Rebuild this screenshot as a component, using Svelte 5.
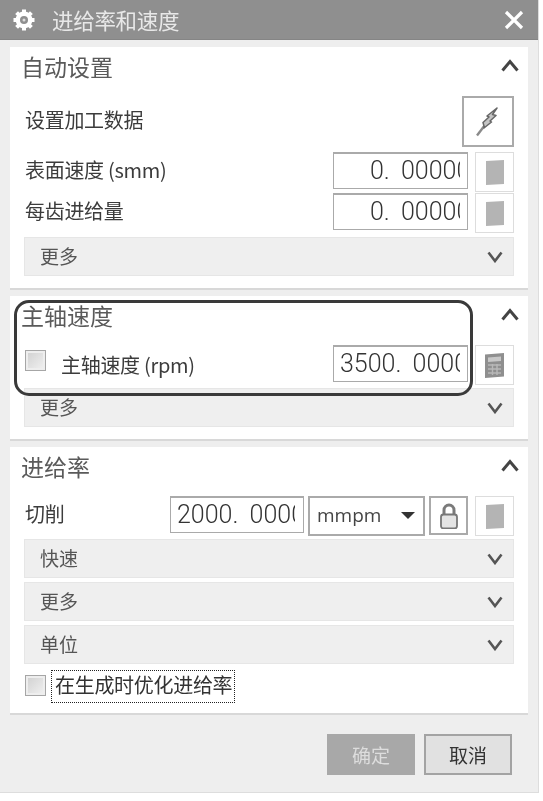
<script>
  const gearTeeth = [0, 45, 90, 135, 180, 225, 270, 315];
</script>

{#snippet bar(label)}
  <div class="bar">
    <span>{label}</span>
    <svg width="16" height="12" viewBox="0 0 16 12"><path d="M1.5 1.5 L8 10 L14.5 1.5" fill="none" stroke="#555" stroke-width="2.6"/></svg>
  </div>
{/snippet}

{#snippet head(label)}
  <div class="head">
    <span>{label}</span>
    <svg width="18" height="13" viewBox="0 0 18 13"><path d="M1.5 11.5 L9 2.5 L16.5 11.5" fill="none" stroke="#444" stroke-width="3"/></svg>
  </div>
{/snippet}

{#snippet blank()}
  <div class="mini">
    <svg width="18" height="25" viewBox="0 0 18 25"><path d="M0 1 L18 0 V24 L0 25 Z" fill="#b4b4b4"/></svg>
  </div>
{/snippet}

<div class="window">
  <header class="title">
    <svg class="gear" width="22" height="22" viewBox="0 0 22 22">
      <circle cx="11" cy="11" r="8.4" fill="#fff"/>
      {#each gearTeeth as a}
        <rect x="9" y="0.5" width="4" height="4" fill="#fff" transform="rotate({a} 11 11)"/>
      {/each}
      <circle cx="11" cy="11" r="4" fill="#8f8f8f"/>
      <circle cx="11" cy="11" r="1.5" fill="#dcdcdc"/>
    </svg>
    <span class="title-text">进给率和速度</span>
    <svg class="close" width="20" height="20" viewBox="0 0 20 20"><path d="M2 2 L18 18 M18 2 L2 18" stroke="#fff" stroke-width="3.2"/></svg>
  </header>

  <div class="body">
    <section class="s1">
      {@render head("自动设置")}
      <div class="row data">
        <span class="label">设置加工数据</span>
        <div class="bolt">
          <svg width="24" height="30" viewBox="0 0 24 30">
            <path d="M1 28.5 L9 18" stroke="#8a8a8a" stroke-width="2.4" fill="none"/>
            <path d="M8 19 L7 15.5 L13 10 L11 9 L21 1 L16.5 7.5 L20 8.5 L14 14 L15.5 15 L8 21 Z" fill="#c4c4c4" stroke="#666" stroke-width="1.5" stroke-linejoin="round"/>
          </svg>
        </div>
      </div>
      <div class="row field">
        <span class="label">表面速度 (smm)</span>
        <div class="num zero"><span>0. 00000</span></div>
        {@render blank()}
      </div>
      <div class="row field second">
        <span class="label">每齿进给量</span>
        <div class="num zero"><span>0. 00000</span></div>
        {@render blank()}
      </div>
      {@render bar("更多")}
    </section>

    <section class="s2">
      {@render head("主轴速度")}
      <div class="row field">
        <span class="check"></span>
        <span class="label rpm">主轴速度 (rpm)</span>
        <div class="num"><span>3500. 0000</span></div>
        <div class="mini">
          <svg width="19" height="25" viewBox="0 0 19 25">
            <path d="M0 1.5 L19 0 V23.5 L0 25 Z" fill="#8f8f8f"/>
            <path d="M3 4.5 L16 3.5 V8 L3 9 Z" fill="#c8c8c8"/>
            <path d="M3 12 H16 M3 16 H16 M3 20 H16 M7.5 11 V22 M12 11 V22" stroke="#b8b8b8" stroke-width="1.4"/>
          </svg>
        </div>
      </div>
      {@render bar("更多")}
    </section>

    <section class="s3">
      {@render head("进给率")}
      <div class="row cut">
        <span class="label">切削</span>
        <div class="num small"><span>2000. 0000</span></div>
        <div class="select">
          <span>mmpm</span>
          <svg width="14" height="7" viewBox="0 0 14 7"><path d="M0 0 H14 L7 7 Z" fill="#333"/></svg>
        </div>
        <div class="lock">
          <svg width="18" height="26" viewBox="0 0 18 26">
            <path d="M4 12 V7 a5 5 0 0 1 10 0 V12" fill="none" stroke="#7a7a7a" stroke-width="3"/>
            <rect x="1" y="11.5" width="16" height="14" rx="2.5" fill="#e4e4e4" stroke="#777" stroke-width="1.8"/>
          </svg>
        </div>
        {@render blank()}
      </div>
      <div class="stack">
        {@render bar("快速")}
        {@render bar("更多")}
        {@render bar("单位")}
      </div>
      <div class="opt">
        <span class="check"></span>
        <span class="focus">在生成时优化进给率</span>
      </div>
    </section>

    <footer class="actions">
      <button class="ok">确定</button>
      <button class="cancel">取消</button>
    </footer>
  </div>

  <div class="note"></div>
</div>

<style>
  :global(body) { background: #fff; }
  .window {
    position: relative;
    width: 539px;
    height: 793px;
    display: flex;
    flex-direction: column;
    background: #eee;
    box-sizing: border-box;
    font-family: "Noto Sans CJK SC", "Open Sans", sans-serif;
    color: #444;
    font-size: 20px;
    letter-spacing: -0.3px;
    border-bottom: 1px solid #ddd;
    border-right: 1px solid #ddd;
    filter: blur(0.4px);
  }
  .title {
    background: #8f8f8f;
    border-bottom: 1px solid #858585;
    display: flex;
    align-items: center;
    padding: 0 14px 0 13px;
    flex: none;
    box-sizing: border-box;
    height: 40px;
  }
  .title-text { margin-left: 17px; font-size: 21.5px; flex: 1; line-height: 1; color: #e8e8e8; }
  .body { flex: 1; display: flex; flex-direction: column; gap: 6px; padding: 7px 10px 0; }
  section {
    background: #fff;
    border-bottom: 2px solid #d8d8d8;
    padding: 0 14px;
    box-sizing: border-box;
    flex: none;
  }
  .s1 { height: 243px; }
  .s2 { height: 145px; }
  .s3 { height: 268px; }
  .head {
    height: 42px;
    box-sizing: border-box;
    padding-bottom: 4px;
    margin: 0 0 7px -3px;
    display: flex;
    align-items: center;
    justify-content: space-between;
    font-size: 23px;
    letter-spacing: 0;
    color: #5a5a5a;
  }
  .head span { line-height: 1; }
  .head svg { margin-right: -5px; margin-top: -1px; }
  .row { display: flex; align-items: flex-start; }
  .label { flex: 1; line-height: 1; color: #3c3c3c; padding-top: 8px; margin-left: 1px; white-space: nowrap; }
  .data { height: 51px; align-items: center; margin-bottom: 5px; }
  .data .label { padding: 0 0 4px; }
  .bolt {
    width: 52px; height: 51px; box-sizing: border-box;
    border: 2px solid #aaa;
    display: flex; align-items: center; justify-content: center;
  }
  .field { height: 41px; gap: 7px; }
  .field.second { height: 41px; margin-bottom: 3px; }
  .num {
    width: 135px; height: 37px; box-sizing: border-box;
    border: 1px solid #aaa;
    border-width: 2px 1px 1px 1px;
    padding: 0 7px 0 6px;
    background: #fff;
    flex: none;
  }
  .num span {
    display: block;
    overflow: hidden;
    white-space: pre;
    font-family: Roboto, sans-serif;
    font-weight: 300;
    font-size: 25px;
    letter-spacing: 0;
    word-spacing: 5px;
    line-height: 34px;
    color: #333;
  }
  .num.zero { padding-left: 36px; }
  .num.small { width: 134px; padding-right: 8px; }
  .mini {
    width: 39px; height: 40px; box-sizing: border-box;
    border: 1px solid #ddd;
    display: flex; align-items: center; justify-content: center;
    flex: none;
  }
  .bar {
    height: 39px; box-sizing: border-box;
    background: #efefef;
    border: 1px solid #e6e6e6;
    display: flex; align-items: center; justify-content: space-between;
    padding: 0 10px 3px 15px;
    color: #555;
    font-size: 19px;
    letter-spacing: 0;
  }
  .bar svg { margin-top: 3px; }
  .check {
    width: 21px; height: 21px; box-sizing: border-box; flex: none;
    border: 1px solid #a6a6a6;
    background: linear-gradient(135deg, #cfcfcf, #f2f2f2);
    box-shadow: inset 0 0 0 2px #eee;
    margin: 5px 0 0 1px;
  }
  .rpm { flex: 1; margin-left: 8px; padding-top: 10px; }
  .s2 .field { margin-bottom: 2px; }
  .cut { height: 40px; margin-bottom: 3px; }
  .cut .label { flex: none; width: 145px; }
  .select {
    width: 118px; height: 40px; box-sizing: border-box; margin-left: 4px;
    border: 2px solid #aaa;
    display: flex; align-items: center; justify-content: space-between;
    padding: 0 8px 2px 7px;
    font-family: "Open Sans", sans-serif;
    font-size: 19px;
    letter-spacing: 0;
    color: #444;
  }
  .lock {
    width: 39px; height: 39px; margin-left: 4px; box-sizing: border-box;
    border: 2px solid #aaa;
    display: flex; align-items: center; justify-content: center;
  }
  .cut .mini { margin-left: 7px; }
  .stack { display: flex; flex-direction: column; gap: 4px; }
  .opt { display: flex; align-items: flex-start; margin-top: 6px; }
  .opt .check { margin-top: 5px; }
  .focus {
    margin-left: 5px;
    border: 1.5px dotted #222;
    height: 33px; box-sizing: border-box;
    padding: 0 2px 0 3px;
    line-height: 27px;
    color: #333;
    white-space: nowrap;
  }
  .actions { display: flex; justify-content: flex-end; gap: 9px; padding: 13px 16px 0 0; }
  button {
    width: 88px; height: 41px;
    font-family: "Noto Sans CJK SC", sans-serif;
    font-size: 19px;
    line-height: 1;
    padding: 0;
    border: 2px solid #a8a8a8;
  }
  .ok { background: #a8a8a8; color: #ddd; }
  .cancel { background: #e1e1e1; color: #333; border-color: #a3a3a3; }
  .note {
    position: absolute;
    left: 14px; top: 300px;
    width: 459px; height: 96px;
    box-sizing: border-box;
    border: 3px solid #3a3a3a;
    border-radius: 15px;
    pointer-events: none;
  }
</style>
